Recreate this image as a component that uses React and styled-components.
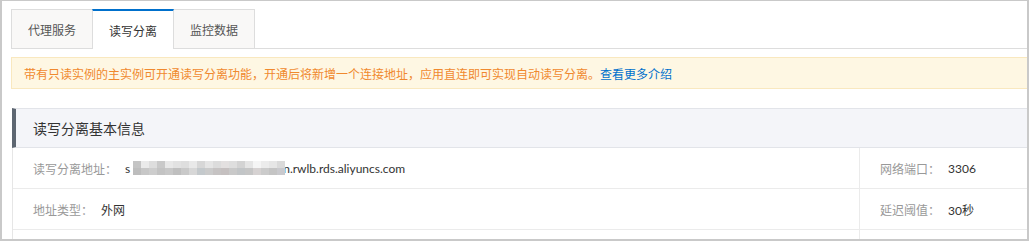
import React from 'react'
import styled, { createGlobalStyle } from 'styled-components'

const GlobalStyle = createGlobalStyle`
  html, body { margin: 0; padding: 0; background: #fff; }
  body {
    font-family: Lato, "Noto Sans CJK SC", sans-serif;
    font-size: 12px;
    color: #333;
  }
`

const Frame = styled.div`
  box-sizing: border-box;
  width: 1029px;
  height: 241px;
  border-style: solid;
  border-color: #c9c9c9;
  border-width: 1px 2px 2px 2px;
  padding: 8px 0 0 9px;
  overflow: hidden;
`

const TabBar = styled.div`
  display: flex;
  border-bottom: 1px solid #ddd;
  height: 39px;
`

const Tab = styled.div`
  box-sizing: border-box;
  width: 82px;
  height: ${p => (p.$active ? '40px' : '39px')};
  display: flex;
  align-items: center;
  justify-content: center;
  font-size: 12px;
  color: ${p => (p.$active ? '#333' : '#555')};
  background: ${p => (p.$active ? '#fff' : '#f9f8f7')};
  border: 1px solid #ddd;
  border-top: ${p => (p.$active ? '2px solid #0070cc' : '1px solid #ddd')};
  border-bottom: none;
  margin-left: -1px;
  position: relative;
  z-index: ${p => (p.$active ? 1 : 0)};
  &:first-child { margin-left: 0; }
`

const Notice = styled.div`
  box-sizing: border-box;
  margin-top: 8px;
  height: 32px;
  display: flex;
  align-items: center;
  padding-left: 12px;
  background: #fef7e3;
  border: 1px solid #f9e8bf;
  border-right: none;
  color: #f0892e;
  font-size: 12px;
`

const Link = styled.a`
  color: #0070cc;
  text-decoration: none;
`

const Section = styled.div`
  margin-top: 19px;
  margin-left: 1px;
  border-left: 1px solid #e6e6e6;
`

const Header = styled.div`
  box-sizing: border-box;
  height: 40px;
  display: flex;
  align-items: center;
  padding-left: 17px;
  margin-left: -1px;
  background: #f4f5f9;
  border-top: 1px solid #e2e4e9;
  border-bottom: 1px solid #e2e4e9;
  border-left: 4px solid #5d6671;
  font-size: 14px;
  color: #333;
`

const Row = styled.div`
  display: grid;
  grid-template-columns: 846px 1fr;
  height: 40px;
  border-bottom: 1px solid #ebebeb;
`

const Cell = styled.div`
  display: flex;
  align-items: center;
  padding-left: 20px;
  & + & { border-left: 1px solid #ebebeb; }
`

const Label = styled.span`
  color: #999;
  margin-right: 8px;
`

const Value = styled.span`
  color: #333;
  display: inline-flex;
  align-items: center;
`

const Mosaic = styled.span`
  display: inline-grid;
  grid-template-columns: repeat(19, 8px);
  grid-auto-rows: 7px;
  margin: 0 -2px 0 3px;
  position: relative;
`

const Px = styled.span`
  display: block;
`

const top = ['#c4c4c4', '#eaeaea', '#dddddd', '#c9c9c9', '#e8e8e8', '#e2e2e2', '#dedede', '#e9e9e9', '#d7d7d7', '#e5e5e5', '#dcdcdc', '#e3e0e0', '#dedede', '#d3d3d3', '#e5e5e5', '#f5f5f5', '#ececec', '#e6e6e6', '#dadada']
const bottom = ['#bdbdbd', '#c7c7c7', '#cdcdcd', '#c3c3c3', '#c8c8c8', '#bfbfbf', '#c9c9c9', '#d7d7d7', '#c4c9cc', '#cbcbcb', '#c6c3c3', '#c5c0c0', '#c9c9c9', '#c2c5c7', '#c6c6c6', '#d6d2d2', '#cbcbcb', '#c4c4c4', '#c9c9cd']

export default function App() {
  return (
    <>
      <GlobalStyle />
      <Frame>
        <TabBar>
          <Tab>代理服务</Tab>
          <Tab $active>读写分离</Tab>
          <Tab>监控数据</Tab>
        </TabBar>
        <Notice>
          带有只读实例的主实例可开通读写分离功能，开通后将新增一个连接地址，应用直连即可实现自动读写分离。
          <Link href="#">查看更多介绍</Link>
        </Notice>
        <Section>
          <Header>读写分离基本信息</Header>
          <Row>
            <Cell>
              <Label>读写分离地址：</Label>
              <Value>
                s
                <Mosaic>
                  {top.concat(bottom).map((c, i) => (
                    <Px key={i} style={{ background: c }} />
                  ))}
                </Mosaic>
                n.rwlb.rds.aliyuncs.com
              </Value>
            </Cell>
            <Cell>
              <Label>网络端口：</Label>
              <Value>3306</Value>
            </Cell>
          </Row>
          <Row>
            <Cell>
              <Label>地址类型：</Label>
              <Value>外网</Value>
            </Cell>
            <Cell>
              <Label>延迟阈值：</Label>
              <Value>30秒</Value>
            </Cell>
          </Row>
          <Row>
            <Cell />
            <Cell />
          </Row>
        </Section>
      </Frame>
    </>
  )
}
